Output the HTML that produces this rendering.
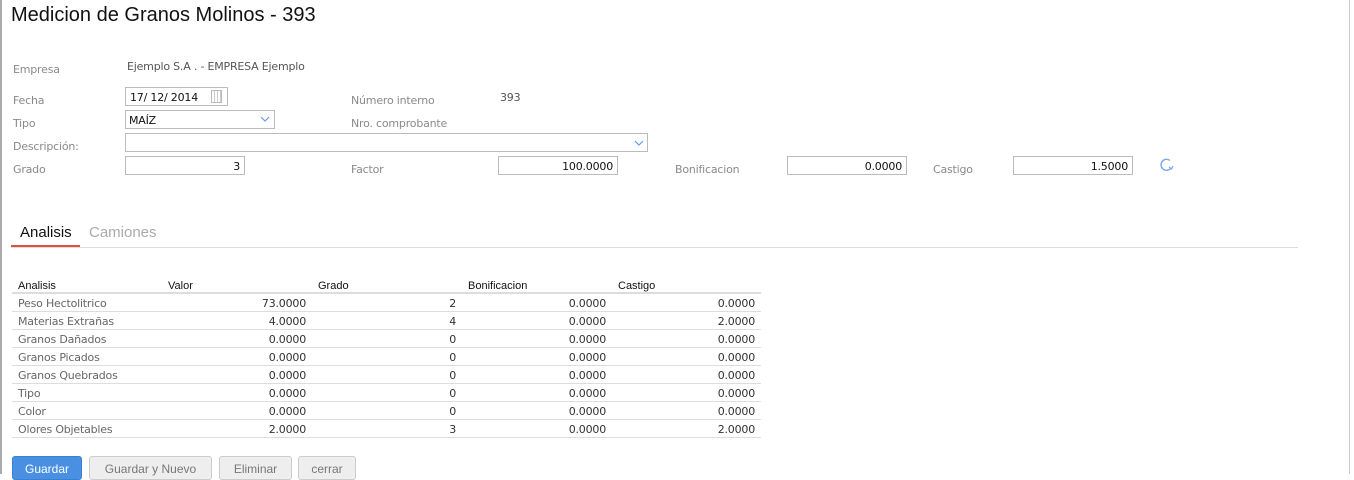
<!DOCTYPE html>
<html><head><meta charset="utf-8"><style>
*{margin:0;padding:0;box-sizing:border-box}
body{width:1354px;height:474px;overflow:hidden;background:#fff;font-family:"Liberation Sans","DejaVu Sans",sans-serif;position:relative}
.a{position:absolute;white-space:nowrap}
.l{font-size:11px;color:#8a8a8a;font-family:"DejaVu Sans",sans-serif;letter-spacing:-0.2px}
.v{font-size:11px;color:#555;font-family:"DejaVu Sans",sans-serif;letter-spacing:-0.2px}
.in{position:absolute;border:1px solid #bbb;height:19px;background:#fff;font-size:11px;color:#111;text-align:right;padding:3px 4px 0 0;font-family:"DejaVu Sans",sans-serif;letter-spacing:-0.2px}
table{position:absolute;left:12px;top:278px;width:749px;border-collapse:collapse;font-size:11px}
th{font-weight:normal;color:#111;text-align:left;height:15px;border-bottom:2px solid #ddd;padding:0 6px;vertical-align:bottom;font-family:"Liberation Sans",sans-serif}
td{height:18px;border-bottom:1px solid #ddd;color:#333;padding:2px 6px 0;text-align:right;font-family:"DejaVu Sans",sans-serif;letter-spacing:-0.2px}
td:first-child{text-align:left;color:#666}
.b{position:absolute;top:456px;height:24px;border:1px solid #ccc;border-radius:3px;background:#eee;color:#777;font-size:12px;text-align:center;padding-top:5px}
</style></head><body>
<div class="a" style="left:0;top:0;width:2px;height:474px;background:#aaa"></div>
<div class="a" style="left:1349px;top:0;width:1px;height:474px;background:#ccc"></div>
<div class="a" style="left:11px;top:4px;font-size:20px;color:#111">Medicion de Granos Molinos - 393</div>
<div class="a l" style="left:13px;top:63px">Empresa</div>
<div class="a v" style="left:127px;top:60px">Ejemplo S.A . - EMPRESA Ejemplo</div>
<div class="a l" style="left:13px;top:94px">Fecha</div>
<div class="in" style="left:125px;top:87px;width:103px;text-align:left;padding-left:4px">17/ 12/ 2014</div>
<div class="a" style="left:211px;top:90px;width:11px;height:13px;border:1px solid #bbb;background:repeating-linear-gradient(90deg,#fff 0 2px,#ccc 2px 3px)"></div>
<div class="a l" style="left:351px;top:94px">Número interno</div>
<div class="a v" style="left:500px;top:91px">393</div>
<div class="a l" style="left:13px;top:117px">Tipo</div>
<div class="in" style="left:125px;top:110px;width:150px;text-align:left;padding-left:3px">MAÍZ</div>
<svg class="a" style="left:260px;top:116px" width="10" height="7"><path d="M1 1l4 4 4-4" fill="none" stroke="#6a9be8" stroke-width="1.2"/></svg>
<div class="a l" style="left:351px;top:117px">Nro. comprobante</div>
<div class="a l" style="left:13px;top:140px">Descripción:</div>
<div class="in" style="left:125px;top:133px;width:523px"></div>
<svg class="a" style="left:634px;top:140px" width="10" height="7"><path d="M1 1l4 4 4-4" fill="none" stroke="#6a9be8" stroke-width="1.2"/></svg>
<div class="a l" style="left:13px;top:163px">Grado</div>
<div class="in" style="left:125px;top:156px;width:120px">3</div>
<div class="a l" style="left:351px;top:163px">Factor</div>
<div class="in" style="left:498px;top:156px;width:120px">100.0000</div>
<div class="a l" style="left:675px;top:163px">Bonificacion</div>
<div class="in" style="left:787px;top:156px;width:120px">0.0000</div>
<div class="a l" style="left:933px;top:163px">Castigo</div>
<div class="in" style="left:1013px;top:156px;width:120px">1.5000</div>
<svg class="a" style="left:1159px;top:157px" width="16" height="16"><path d="M12 11A5.5 5.5 0 1 1 11 3.5" fill="none" stroke="#7aa7f0" stroke-width="1.4"/><path d="M10 10l2.5 2 1.5-3" fill="none" stroke="#7aa7f0" stroke-width="1.2"/></svg>
<div class="a" style="left:20px;top:224px;font-size:15px;color:#111">Analisis</div>
<div class="a" style="left:89px;top:224px;font-size:15px;color:#aaa">Camiones</div>
<div class="a" style="left:11px;top:245px;width:69px;height:3px;background:#e0523c"></div>
<div class="a" style="left:11px;top:247px;width:1287px;height:1px;background:#ddd"></div>
<table>
<tr><th style="width:150px">Analisis</th><th style="width:150px">Valor</th><th style="width:150px">Grado</th><th style="width:150px">Bonificacion</th><th>Castigo</th></tr>
<tr><td>Peso Hectolitrico</td><td>73.0000</td><td>2</td><td>0.0000</td><td>0.0000</td></tr>
<tr><td>Materias Extrañas</td><td>4.0000</td><td>4</td><td>0.0000</td><td>2.0000</td></tr>
<tr><td>Granos Dañados</td><td>0.0000</td><td>0</td><td>0.0000</td><td>0.0000</td></tr>
<tr><td>Granos Picados</td><td>0.0000</td><td>0</td><td>0.0000</td><td>0.0000</td></tr>
<tr><td>Granos Quebrados</td><td>0.0000</td><td>0</td><td>0.0000</td><td>0.0000</td></tr>
<tr><td>Tipo</td><td>0.0000</td><td>0</td><td>0.0000</td><td>0.0000</td></tr>
<tr><td>Color</td><td>0.0000</td><td>0</td><td>0.0000</td><td>0.0000</td></tr>
<tr><td>Olores Objetables</td><td>2.0000</td><td>3</td><td>0.0000</td><td>2.0000</td></tr>
</table>
<div class="b" style="left:12px;width:70px;background:#4a90e2;border-color:#3d7fd0;color:#fff">Guardar</div>
<div class="b" style="left:89px;width:123px">Guardar y Nuevo</div>
<div class="b" style="left:219px;width:73px">Eliminar</div>
<div class="b" style="left:298px;width:58px">cerrar</div>
</body></html>
